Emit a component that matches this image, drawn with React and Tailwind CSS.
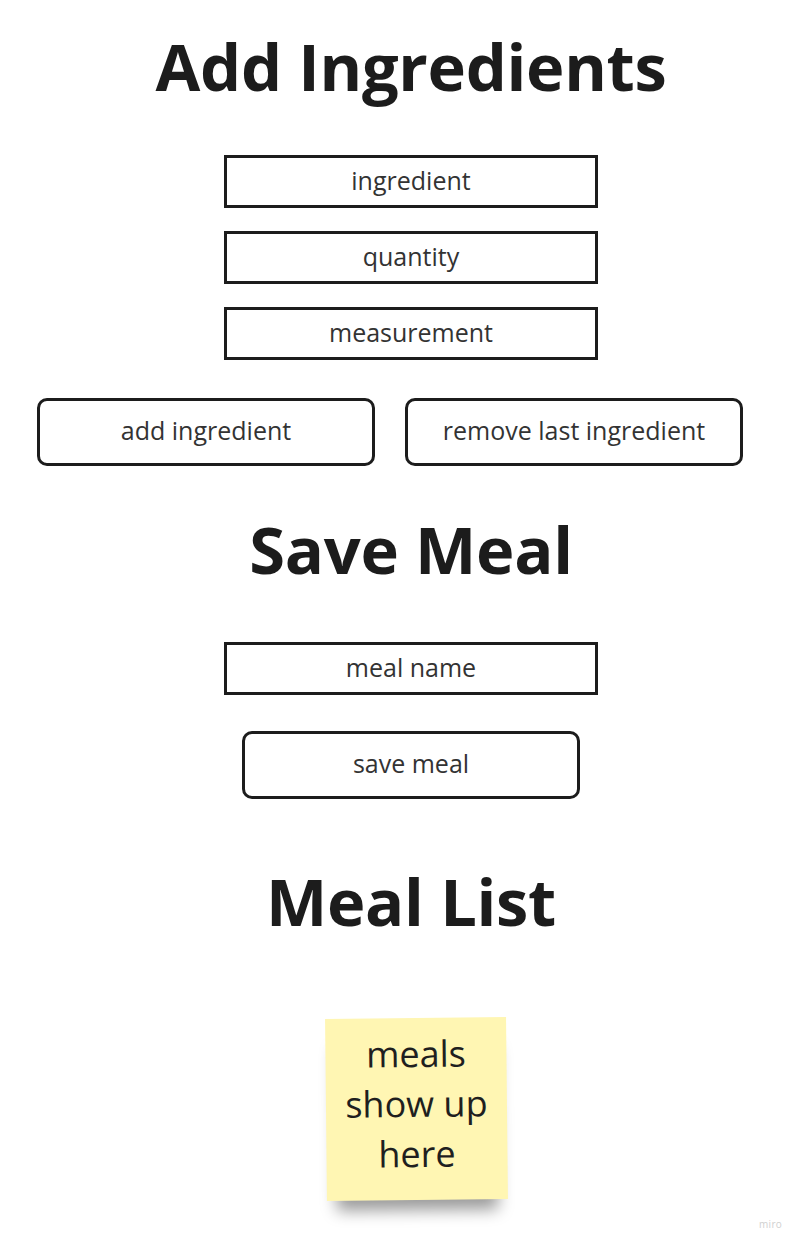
import React from "react";

function Field({ label }) {
  return (
    <div className="w-[374px] h-[53px] border-[3px] border-[#1c1c1c] flex items-center justify-center pb-[3px] text-[25px] leading-none text-[#333333]">
      {label}
    </div>
  );
}

function OutlineButton({ label, className = "" }) {
  return (
    <button
      className={`w-[338px] h-[68px] border-[3px] border-[#1c1c1c] rounded-[10px] flex items-center justify-center pb-[3px] text-[25px] leading-none text-[#333333] bg-white ${className}`}
    >
      {label}
    </button>
  );
}

function Heading({ children, className = "" }) {
  return (
    <h1
      className={`text-[65px] leading-[66px] font-bold text-[#1c1c1c] tracking-[-0.3px] ${className}`}
    >
      {children}
    </h1>
  );
}

export default function App() {
  return (
    <div className="relative w-[800px] min-h-[1249px] bg-white font-['Open_Sans',sans-serif] overflow-hidden">
      <div className="flex flex-col items-center pl-[22px]">
        <Heading className="mt-[33px]">Add Ingredients</Heading>

        <div className="mt-[56px] flex flex-col gap-[23px]">
          <Field label="ingredient" />
          <Field label="quantity" />
          <Field label="measurement" />
        </div>
      </div>

      {/* action row sits a little left of the column center */}
      <div className="mt-[38px] ml-[37px] flex gap-[30px]">
        <OutlineButton label="add ingredient" />
        <OutlineButton label="remove last ingredient" />
      </div>

      <div className="flex flex-col items-center pl-[22px]">
        <Heading className="mt-[50px]">Save Meal</Heading>

        <div className="mt-[60px]">
          <Field label="meal name" />
        </div>

        <OutlineButton label="save meal" className="mt-[36px]" />

        <Heading className="mt-[69px]">Meal List</Heading>

        <div className="mt-[84px] ml-[10px] w-[181px] h-[182px] bg-[#fff6b3] -rotate-[0.6deg] shadow-[0_20px_16px_-10px_rgba(0,0,0,0.4)] flex flex-col items-center pt-[11px] text-[36px] leading-[50px] text-[#1f1f1f] text-center">
          <span>meals</span>
          <span>show up</span>
          <span>here</span>
        </div>
      </div>

      <span className="absolute right-[18px] bottom-[17px] text-[10px] text-[#d0d0d0] tracking-wide">
        miro
      </span>
    </div>
  );
}
